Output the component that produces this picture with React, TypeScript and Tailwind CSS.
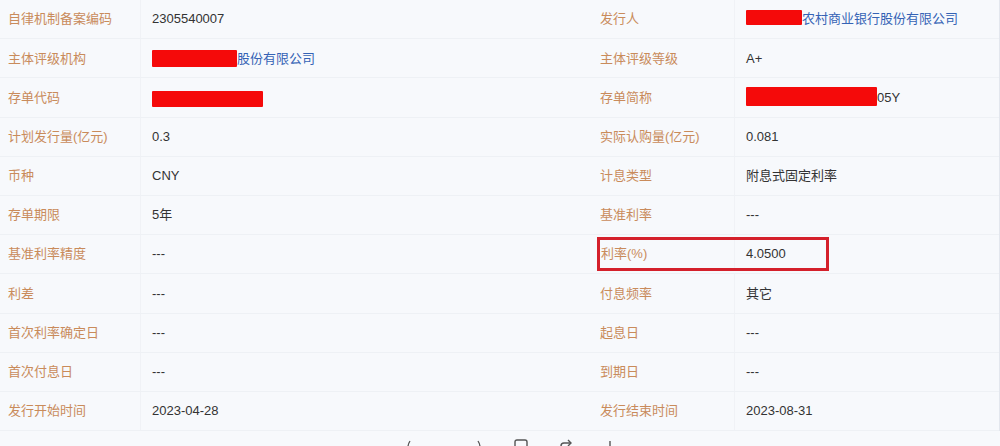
import React from 'react';

type Cell = {
    label: string;
    value: React.ReactNode;
};

const Redact: React.FC<{ w: number; h?: number; up?: number }> = ({ w, h = 16, up = 0 }) => (
    <span
        className="inline-block bg-[#f50a0a] align-middle rounded-[1px]"
        style={{ width: w, height: h, marginTop: -up }}
    />
);

const rows: [Cell, Cell][] = [
    [
        { label: '自律机制备案编码', value: '2305540007' },
        {
            label: '发行人',
            value: (
                <span className="flex items-center text-[#3563b5]">
                    <Redact w={56} h={15} up={4} />
                    <span>农村商业银行股份有限公司</span>
                </span>
            ),
        },
    ],
    [
        {
            label: '主体评级机构',
            value: (
                <span className="flex items-center text-[#3563b5]">
                    <Redact w={85} h={17} />
                    <span>股份有限公司</span>
                </span>
            ),
        },
        { label: '主体评级等级', value: 'A+' },
    ],
    [
        { label: '存单代码', value: <span className="flex items-center pt-[3px]"><Redact w={111} h={16} /></span> },
        {
            label: '存单简称',
            value: (
                <span className="flex items-center">
                    <span className="-mt-[2px] flex"><Redact w={131} h={19} /></span>
                    <span>05Y</span>
                </span>
            ),
        },
    ],
    [
        { label: '计划发行量(亿元)', value: '0.3' },
        { label: '实际认购量(亿元)', value: '0.081' },
    ],
    [
        { label: '币种', value: 'CNY' },
        { label: '计息类型', value: '附息式固定利率' },
    ],
    [
        { label: '存单期限', value: '5年' },
        { label: '基准利率', value: '---' },
    ],
    [
        { label: '基准利率精度', value: '---' },
        { label: '利率(%)', value: '4.0500' },
    ],
    [
        { label: '利差', value: '---' },
        { label: '付息频率', value: '其它' },
    ],
    [
        { label: '首次利率确定日', value: '---' },
        { label: '起息日', value: '---' },
    ],
    [
        { label: '首次付息日', value: '---' },
        { label: '到期日', value: '---' },
    ],
    [
        { label: '发行开始时间', value: '2023-04-28' },
        { label: '发行结束时间', value: '2023-08-31' },
    ],
];

export default function App() {
    return (
        <div
            className="w-[1000px] h-[446px] overflow-hidden bg-[#f7f9fc] text-[13px] text-[#333]"
            style={{ fontFamily: '"Liberation Sans", "Noto Sans CJK SC", sans-serif' }}
        >
            <div className="border-r border-[#e3e7ee]">
                {rows.map(([left, right], i) => (
                    <div
                        key={i}
                        className="grid grid-cols-[141px_439px_155px_265px] h-[39.2px] border-b border-[#eef1f5]"
                    >
                        <div className="flex items-center pl-[8px] text-[#c98b5b] border-r border-[#f0f2f6]">
                            {left.label}
                        </div>
                        <div className="flex items-center pl-[11px]">{left.value}</div>
                        {/* the highlighted interest rate row gets a red frame */}
                        {right.label === '利率(%)' ? (
                            <div className="col-span-2 flex items-stretch py-[2px]">
                                <div className="flex w-[232px] ml-[17px] border-[3px] border-[#d4202b]">
                                    <div className="w-[135px] flex items-center pl-[1px] text-[#c98b5b] border-r border-[#f0f2f6]">
                                        {right.label}
                                    </div>
                                    <div className="flex items-center pl-[11px]">{right.value}</div>
                                </div>
                            </div>
                        ) : (
                            <>
                                <div className="flex items-center pl-[20px] text-[#c98b5b] border-r border-[#f0f2f6]">
                                    {right.label}
                                </div>
                                <div className="flex items-center pl-[11px]">{right.value}</div>
                            </>
                        )}
                    </div>
                ))}
            </div>
            {/* toolbar peeking in at the bottom edge */}
            <div className="flex items-start justify-center gap-[30px] pt-[8px] pl-[20px]">
                <svg width="80" height="14" viewBox="0 0 80 14" fill="none" stroke="#555" strokeWidth="1.3">
                    <path d="M6 2 Q2 8 6 14" />
                    <path d="M34 8 H48" />
                    <path d="M74 2 Q78 8 74 14" />
                </svg>
                <svg width="14" height="14" viewBox="0 0 14 14" fill="none" stroke="#555" strokeWidth="1.4">
                    <path d="M1 14 V3 Q1 1 3 1 H11 Q13 1 13 3 V14" />
                </svg>
                <svg width="16" height="14" viewBox="0 0 16 14" fill="none" stroke="#555" strokeWidth="1.4">
                    <path d="M3 14 V7 Q3 4 6 4 H13" />
                    <path d="M10 1 L13 4 L10 7" />
                </svg>
                <svg width="12" height="14" viewBox="0 0 12 14" fill="none" stroke="#555" strokeWidth="1.4">
                    <path d="M6 2 V14" />
                    <path d="M1 8 H11" />
                </svg>
            </div>
        </div>
    );
}
